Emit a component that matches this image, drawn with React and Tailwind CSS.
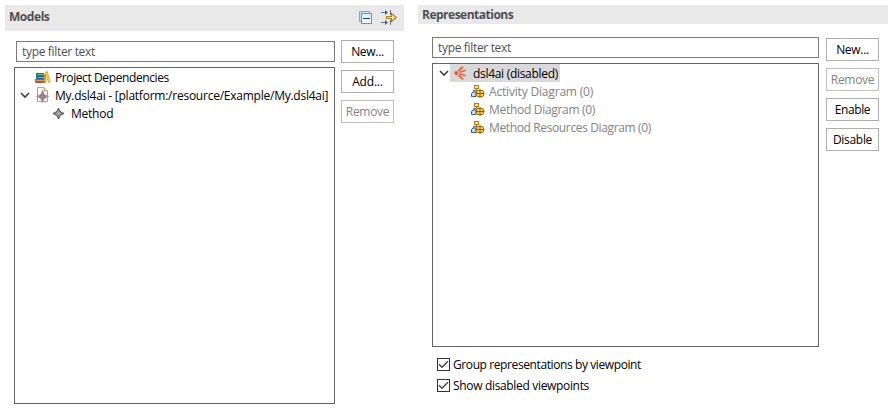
import React from "react";

function CollapseIcon() {
  return (
    <svg width="16" height="16" viewBox="0 0 16 16" className="block shrink-0">
      <path d="M2 12V2H12V4H4V12Z" fill="#c5e4f2" />
      <path d="M3 11.5H1.5V1.5H11.5V3" fill="none" stroke="#7cabc8" />
      <rect x="3.5" y="3.5" width="10" height="10" fill="#f4fafe" stroke="#718fb4" />
      <rect x="4" y="4" width="9" height="3" fill="#dceffa" />
      <rect x="5" y="8" width="7" height="1" fill="#083f70" />
    </svg>
  );
}

function FilterIcon() {
  return (
    <svg width="18" height="18" viewBox="0 0 18 18" className="block shrink-0">
      <path d="M1 3.5H7M1 13.5H7" stroke="#527b98" fill="none" />
      <path d="M5 1L8 3.5L5 6ZM5 11L8 13.5L5 16Z" fill="#3b6885" />
      <path d="M10.5 1V6M10.5 11V16" stroke="#596b80" />
      <path d="M6.5 7.5H11.5V4.5L16.3 8.5L11.5 12.5V9.5H6.5Z" fill="#fff2b5" stroke="#bd7b17" strokeWidth="1.2" />
    </svg>
  );
}

function BooksIcon() {
  return (
    <svg width="16" height="16" viewBox="0 0 16 16" className="block shrink-0">
      <path d="M1 4H9V7H1Z" fill="#16857b" />
      <path d="M3 5H10V6H3Z" fill="#6fbd8e" />
      <path d="M1 7H10V10H2L1 9Z" fill="#176b96" />
      <path d="M3 8H10V9H3Z" fill="#65b8cb" />
      <path d="M0 10H10V14H1L0 13Z" fill="#b05a35" />
      <path d="M1 11H10V12H1Z" fill="#dc9870" />
      <path d="M10 3L12.5 2L15.5 13L13 14Z" fill="#efa51c" />
      <path d="M11.7 4L13.8 12.5" stroke="#ffd66d" />
      <path d="M9 5H11V14H9Z" fill="#e09a1f" />
    </svg>
  );
}

function ModelFileIcon() {
  return (
    <svg width="16" height="16" viewBox="0 0 16 16" className="block shrink-0">
      <path d="M2.5 .5H9L12.5 4V14.5H2.5Z" fill="#fffdf5" stroke="#b9a477" />
      <path d="M9 .5V4H12.5" fill="#ead9aa" stroke="#b9a477" />
      <path d="M7.5 3.5L9.3 7.7L13.5 9.5L9.3 11.3L7.5 15.5L5.7 11.3L1.5 9.5L5.7 7.7Z" fill="#a99da5" stroke="#b8799b" strokeWidth=".8" />
      <path d="M7.5 6.5L10.5 9.5L7.5 12.5L4.5 9.5Z" fill="#8f8d8c" stroke="#6f6871" strokeWidth=".7" />
    </svg>
  );
}

function DiamondIcon() {
  return (
    <svg width="16" height="16" viewBox="0 0 16 16" className="block shrink-0">
      <path d="M7.5 3L9.3 6.7L13 8.5L9.3 10.3L7.5 14L5.7 10.3L2 8.5L5.7 6.7Z" fill="#828282" stroke="#4b4b4b" strokeWidth=".9" />
      <path d="M7.5 6L10 8.5L7.5 11L5 8.5Z" fill="#a9aaa6" />
    </svg>
  );
}

function ViewpointIcon() {
  return (
    <svg width="16" height="16" viewBox="0 0 16 16" className="block shrink-0">
      <circle cx="3.3" cy="8" r="1.9" fill="#ef5533" />
      <g fill="none" stroke="#ef653e">
        <path d="M5.3 6L10 1.8" strokeWidth="2.2" />
        <path d="M6.5 7.3L12.8 5.2M6.5 8.7L12.8 10.8" strokeWidth="1.6" />
        <path d="M5.3 10L10 14.2" strokeWidth="2.2" />
      </g>
    </svg>
  );
}

function DiagramIcon() {
  return (
    <svg width="16" height="16" viewBox="0 0 16 16" className="block shrink-0">
      <path d="M6.5 5V7.5H3.5V9" fill="none" stroke="#526a86" />
      <rect x="4.5" y="2.5" width="4" height="3" fill="#ffe49a" stroke="#b57a13" />
      <path d="M1.5 10.5L3 9H6V13.5H1.5Z" fill="#c7daf2" stroke="#355d96" />
      <rect x="6.5" y="7.5" width="7" height="6" rx="1.5" fill="#ffd64f" stroke="#a56b08" />
      <path d="M10 6V15M6 10.5H14.5" fill="none" stroke="#8d5906" />
    </svg>
  );
}

function Chevron() {
  return (
    <svg width="10" height="8" viewBox="0 0 10 8" className="block shrink-0">
      <path d="M1 2L5 6L9 2" fill="none" stroke="#404040" strokeWidth="1.6" />
    </svg>
  );
}

function Button({ children, disabled = false, tracking }) {
  return (
    <button
      disabled={disabled}
      className={`flex h-[23px] w-[53px] items-center justify-center border bg-white leading-4 whitespace-nowrap ${tracking} ${
        disabled ? "border-[#bfbfbf] text-[#838383]" : "border-[#adadad] text-black"
      }`}
    >
      {children}
    </button>
  );
}

function FilterField({ className }) {
  return (
    <div className={`flex h-[21px] items-center border border-[#7a7a7a] bg-white pl-[5px] text-[#505050] ${className}`}>
      <span className="tracking-[-0.33px]">type filter text</span>
    </div>
  );
}

function DiagramRow({ label, tracking }) {
  return (
    <div className="flex h-[18px] items-center pl-[37px] text-[#838383]">
      <DiagramIcon />
      <span className={`ml-[3px] pt-px ${tracking}`}>{label}</span>
    </div>
  );
}

function CheckRow({ label, tracking }) {
  return (
    <div className="flex h-[21px] items-center">
      <span className="flex size-[13px] items-center justify-center border border-[#333] bg-white">
        <svg width="11" height="11" viewBox="0 0 11 11" className="block shrink-0">
          <path d="M1 5.3L4 8.3L10 2.3" fill="none" stroke="#404040" strokeWidth="1.3" />
        </svg>
      </span>
      <span className={`ml-[3px] ${tracking}`}>{label}</span>
    </div>
  );
}

export default function App() {
  return (
    <main className="flex h-[413px] w-[888px] overflow-hidden bg-white pt-[5px] pl-[5px] font-['Open_Sans','Noto_Sans',sans-serif] text-[12px] leading-4 whitespace-nowrap text-black">
      <section className="w-[399px] shrink-0">
        <header className="flex h-[26px] items-center bg-[#e9e9e9] pl-[4px]">
          <h2 className="-mt-[3px] font-bold tracking-[-0.45px] text-[#505050]">Models</h2>
          <div className="mr-[6px] ml-auto flex items-center gap-[6px]">
            <CollapseIcon />
            <FilterIcon />
          </div>
        </header>
        <div className="flex pt-[9px] pl-[9px]">
          <div className="pt-px">
            <FilterField className="ml-[2px] w-[319px]" />
            <div className="mt-[5px] h-[337px] w-[321px] border border-[#646464] bg-white">
              <div className="flex h-[18px] items-center pl-[20px]">
                <BooksIcon />
                <span className="ml-[4px] pt-px tracking-[-0.4px]">Project Dependencies</span>
              </div>
              <div className="flex h-[18px] items-center pl-[5px]">
                <Chevron />
                <span className="ml-[5px]"><ModelFileIcon /></span>
                <span className="ml-[4px] pt-px tracking-[-0.24px]">My.dsl4ai - [platform:/resource/Example/My.dsl4ai]</span>
              </div>
              <div className="flex h-[18px] items-center pl-[36px]">
                <DiamondIcon />
                <span className="ml-[4px] pt-px tracking-[-0.25px]">Method</span>
              </div>
            </div>
          </div>
          <div className="ml-[6px] flex flex-col gap-[7px]">
            <Button tracking="tracking-[-0.3px]">New...</Button>
            <Button tracking="tracking-[-0.2px]">Add...</Button>
            <Button disabled tracking="tracking-[-0.3px]">Remove</Button>
          </div>
        </div>
      </section>

      <section className="ml-[14px] w-[470px] shrink-0">
        <header className="flex h-[19px] items-center bg-[#e9e9e9] pl-[4px]">
          <h2 className="font-bold tracking-[-0.5px] text-[#505050]">Representations</h2>
        </header>
        <div className="flex pt-[13px] pl-[14px]">
          <div>
            <FilterField className="w-[387px]" />
            <div className="mt-[5px] h-[284px] w-[387px] border border-[#646464] bg-white">
              <div className="flex h-[18px] items-center pl-[6px]">
                <Chevron />
                <div className="ml-px flex h-[18px] w-[110px] items-center bg-[#d9d9d9] pl-[3px]">
                  <ViewpointIcon />
                  <span className="ml-[4px] pt-px tracking-[-0.3px]">dsl4ai (disabled)</span>
                </div>
              </div>
              <DiagramRow label="Activity Diagram (0)" tracking="tracking-[-0.18px]" />
              <DiagramRow label="Method Diagram (0)" tracking="tracking-[-0.3px]" />
              <DiagramRow label="Method Resources Diagram (0)" tracking="tracking-[-0.37px]" />
            </div>
            <div className="pt-[7px] pl-[5px]">
              <CheckRow label="Group representations by viewpoint" tracking="tracking-[-0.4px]" />
              <CheckRow label="Show disabled viewpoints" tracking="tracking-[-0.33px]" />
            </div>
          </div>
          <div className="mt-px ml-[7px] flex flex-col gap-[7px]">
            <Button tracking="tracking-[-0.3px]">New...</Button>
            <Button disabled tracking="tracking-[-0.3px]">Remove</Button>
            <Button tracking="tracking-[-0.4px]">Enable</Button>
            <Button tracking="tracking-[-0.3px]">Disable</Button>
          </div>
        </div>
      </section>
    </main>
  );
}
